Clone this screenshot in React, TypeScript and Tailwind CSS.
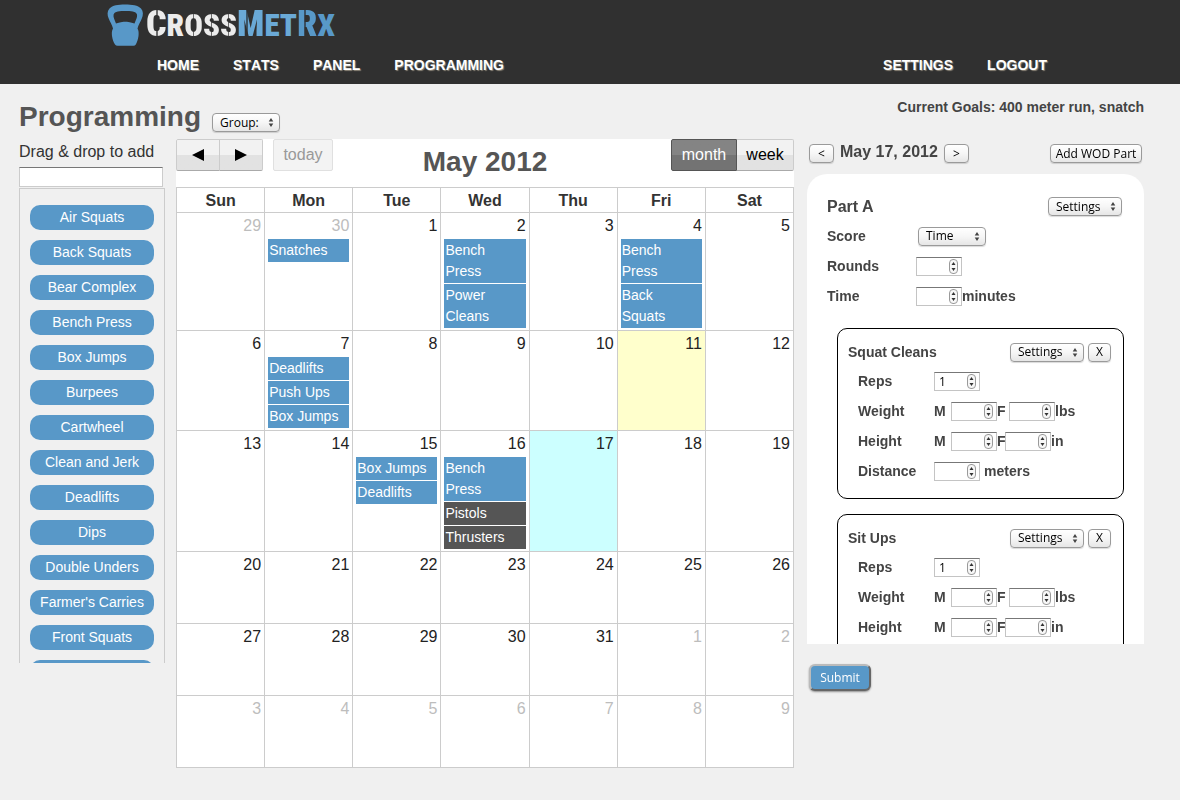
import { useState } from "react";
import type { ReactNode } from "react";

const exercises = [
  "Air Squats",
  "Back Squats",
  "Bear Complex",
  "Bench Press",
  "Box Jumps",
  "Burpees",
  "Cartwheel",
  "Clean and Jerk",
  "Deadlifts",
  "Dips",
  "Double Unders",
  "Farmer's Carries",
  "Front Squats",
  "Handstands",
];

type CalendarEvent = { title: string; dark?: boolean };
type Day = { n: number; other?: boolean; mark?: "today" | "selected"; events?: CalendarEvent[] };

const weeks: Day[][] = [
  [
    { n: 29, other: true },
    { n: 30, other: true, events: [{ title: "Snatches" }] },
    { n: 1 },
    { n: 2, events: [{ title: "Bench Press" }, { title: "Power Cleans" }] },
    { n: 3 },
    { n: 4, events: [{ title: "Bench Press" }, { title: "Back Squats" }] },
    { n: 5 },
  ],
  [
    { n: 6 },
    { n: 7, events: [{ title: "Deadlifts" }, { title: "Push Ups" }, { title: "Box Jumps" }] },
    { n: 8 },
    { n: 9 },
    { n: 10 },
    { n: 11, mark: "today" },
    { n: 12 },
  ],
  [
    { n: 13 },
    { n: 14 },
    { n: 15, events: [{ title: "Box Jumps" }, { title: "Deadlifts" }] },
    {
      n: 16,
      events: [{ title: "Bench Press" }, { title: "Pistols", dark: true }, { title: "Thrusters", dark: true }],
    },
    { n: 17, mark: "selected" },
    { n: 18 },
    { n: 19 },
  ],
  [20, 21, 22, 23, 24, 25, 26].map((n) => ({ n })),
  [{ n: 27 }, { n: 28 }, { n: 29 }, { n: 30 }, { n: 31 }, { n: 1, other: true }, { n: 2, other: true }],
  [3, 4, 5, 6, 7, 8, 9].map((n) => ({ n, other: true })),
];

const controlFont = "font-['Open_Sans','Noto_Sans',sans-serif] text-[12px] leading-4 font-normal text-black";
const controlFrame =
  "h-[19px] rounded-[4px] border border-[#9a9a9a] bg-linear-to-b from-white via-[#f6f6f6] to-[#e6e6e6] shadow-[0_1px_1px_rgba(0,0,0,0.15)]";

// Stencil cut: a thin vertical gap through the middle of a letter.
const cutWhite =
  "bg-clip-text text-transparent bg-[linear-gradient(90deg,#ebebeb_46%,#6a6a6a_46%,#6a6a6a_55%,#ebebeb_55%)]";
const cutSky =
  "bg-clip-text text-transparent bg-[linear-gradient(90deg,#6aa9d6_34%,#3c5668_34%,#3c5668_41%,#6aa9d6_41%)]";
const cutBlue =
  "bg-clip-text text-transparent bg-[linear-gradient(90deg,#5898c8_36%,#3a5063_36%,#3a5063_44%,#5898c8_44%)]";

function Logo() {
  return (
    <a href="#home" aria-label="CrossMetRx" className="flex h-[42px] items-center gap-0.5">
      <svg width="37" height="42" viewBox="0 0 37 42" aria-hidden="true">
        <path
          fillRule="evenodd"
          fill="#5898c8"
          d="M18 0.500C25 0.500 31 1.200 34 4.500C36.500 7.500 36.300 11 34.800 14.500C33.500 18 31.500 20.500 30.500 24.500C31.800 26.500 31.800 29.500 31.500 32C31 35.500 30 38.500 28.800 40.500Q28 41.700 26.500 41.700H10.500Q9 41.700 8 40.500C6.500 38.500 5.500 35.500 5 32C4.700 29.500 4.700 26.500 6 24.500C5 20.500 3 18 1.700 14.500C0.200 11 0 7.500 2.500 4.500C5.500 1.200 11 0.500 18 0.500ZM18.300 7C13 7 7.500 7.200 6.600 10.500C6 13.200 7.500 15.500 9 19.500C11.500 19 13.500 17.700 18.300 17.700C23 17.700 25 19 27.500 19.500C29 15.500 30.600 13.200 30 10.500C29.200 7.200 23.500 7 18.300 7Z"
        />
      </svg>
      <span className="font-['Roboto_Condensed','Roboto',sans-serif] text-[31px] leading-[42px] font-black text-[#ebebeb] uppercase">
        <span className={"text-[36px] " + cutWhite}>C</span>r<span className={cutWhite}>o</span>
        <span className={cutWhite}>s</span>
        <span className={cutWhite}>s</span>
        <span className="text-[#6aa9d6]">
          <span className={"text-[36px] " + cutSky}>M</span>et
        </span>
        <span className="text-[#5898c8]">
          <span className={"text-[36px] " + cutBlue}>R</span>x
        </span>
      </span>
    </a>
  );
}

function NavLink({ children }: { children: string }) {
  return (
    <a
      href={"#" + children.toLowerCase()}
      className="text-[14px] leading-5 font-bold text-white uppercase [font-kerning:none] [text-shadow:1px_1px_1px_#8c8578]"
    >
      {children}
    </a>
  );
}

function PushButton({ children, className, label }: { children: ReactNode; className: string; label?: string }) {
  return (
    <button
      type="button"
      aria-label={label}
      className={"flex shrink-0 items-center justify-center whitespace-nowrap " + controlFont + " " + controlFrame + " " + className}
    >
      {children}
    </button>
  );
}

function Select({ options, label, className }: { options: string[]; label: string; className: string }) {
  return (
    <span className={"relative block shrink-0 " + className}>
      <select
        aria-label={label}
        className={"block w-full appearance-none pl-[7px] " + controlFont + " " + controlFrame}
      >
        {options.map((o) => (
          <option key={o}>{o}</option>
        ))}
      </select>
      <svg className="pointer-events-none absolute top-[5px] right-1.5" width="6" height="9" viewBox="0 0 6 9" aria-hidden="true">
        <path d="M3 0L5.300 3.500H0.700ZM3 9L5.300 5.500H0.700Z" fill="#444" />
      </svg>
    </span>
  );
}

function NumberBox({ label, initial = "" }: { label: string; initial?: string }) {
  const [value, setValue] = useState(initial);
  return (
    <span className="relative block w-[46px] shrink-0">
      <input
        type="number"
        aria-label={label}
        value={value}
        onChange={(e) => setValue(e.target.value)}
        className={
          "block h-[19px] w-full appearance-none border border-[#c4c4c4] border-t-[#777] bg-white pr-4 pl-1 [appearance:textfield] " +
          controlFont
        }
      />
      <svg className="pointer-events-none absolute top-0.5 right-1" width="9" height="15" viewBox="0 0 9 15" aria-hidden="true">
        <rect x="0.500" y="0.500" width="8" height="14" rx="3.500" fill="#f7f7f7" stroke="#9a9a9a" />
        <path d="M4.500 3L6.500 6H2.500ZM4.500 12L6.500 9H2.500Z" fill="#333" />
      </svg>
    </span>
  );
}

function Movement({ name }: { name: string }) {
  const row = "flex h-[30px] items-center pl-2.5";
  const label = "w-[76px] shrink-0";
  return (
    <section className="mb-[15px] h-[171px] rounded-[10px] border border-black pt-[9px] pl-2.5">
      <div className="flex h-7 items-center pr-3">
        <h4 className="flex-1">{name}</h4>
        <Select label={name + " settings"} options={["Settings", "Remove"]} className="w-[74px]" />
        <PushButton label={"Remove " + name} className="ml-1 w-[23px]">
          X
        </PushButton>
      </div>
      <div className={row}>
        <span className={label}>Reps</span>
        <NumberBox label={name + " reps"} initial="1" />
      </div>
      <div className={row}>
        <span className={label}>Weight</span>
        <span className="w-[17px]">M</span>
        <NumberBox label={name + " weight, men"} />
        <span className="w-3">F</span>
        <NumberBox label={name + " weight, women"} />
        <span>lbs</span>
      </div>
      <div className={row}>
        <span className={label}>Height</span>
        <span className="w-[17px]">M</span>
        <NumberBox label={name + " height, men"} />
        <span className="w-2">F</span>
        <NumberBox label={name + " height, women"} />
        <span>in</span>
      </div>
      <div className={row}>
        <span className={label}>Distance</span>
        <NumberBox label={name + " distance"} />
        <span className="ml-1">meters</span>
      </div>
    </section>
  );
}

const barButton =
  "flex h-8 items-center justify-center border border-[#ccc] border-b-[#aaa] bg-linear-to-b from-[#f2f2f2] from-50% to-[#e2e2e2] to-50% text-[16px] text-black";

function Calendar() {
  return (
    <section className="min-w-0 flex-1 bg-white">
      <div className="flex h-12 items-start justify-between">
        <div className="flex flex-1">
          <button type="button" aria-label="Previous month" className={barButton + " w-11 rounded-l-[2px]"}>
            <svg width="12" height="12" viewBox="0 0 12 12" aria-hidden="true">
              <path d="M0 6L12 0V12Z" />
            </svg>
          </button>
          <button type="button" aria-label="Next month" className={barButton + " -ml-px w-11 rounded-r-[2px]"}>
            <svg width="12" height="12" viewBox="0 0 12 12" aria-hidden="true">
              <path d="M12 6L0 0V12Z" />
            </svg>
          </button>
          <button
            type="button"
            disabled
            className="ml-2.5 h-8 w-[60px] rounded-[2px] border border-[#e0e0e0] bg-[#f3f3f3] text-[16px] text-[#999]"
          >
            today
          </button>
        </div>
        <h2 className="pt-[5px] text-[28px] leading-9 font-bold text-[#555] [font-kerning:none]">May 2012</h2>
        <div className="flex flex-1 justify-end">
          <button
            type="button"
            aria-pressed="true"
            className="h-8 w-[66px] rounded-l-[2px] border border-[#555] bg-linear-to-b from-[#848484] from-50% to-[#737373] to-50% text-[16px] text-white"
          >
            month
          </button>
          <button type="button" className={barButton + " w-[57px] rounded-r-[2px] border-l-0"}>
            week
          </button>
        </div>
      </div>
      <table className="w-full table-fixed border-separate border-spacing-0 border-r border-b border-[#ccc] text-[16px] text-[#222]">
        <thead>
          <tr>
            {["Sun", "Mon", "Tue", "Wed", "Thu", "Fri", "Sat"].map((d) => (
              <th key={d} scope="col" className="h-[25px] border-t border-l border-[#ccc] p-0 pt-0.5 leading-[22px] font-bold text-[#333]">
                {d}
              </th>
            ))}
          </tr>
        </thead>
        <tbody>
          {weeks.map((week, i) => (
            <tr key={i}>
              {week.map((day) => (
                <td
                  key={day.n}
                  className={
                    "h-[72px] border-t border-l border-[#ccc] p-0 pb-px align-top " +
                    (day.mark === "today" ? "bg-[#ffffcc]" : day.mark === "selected" ? "bg-[#ccffff]" : "bg-white")
                  }
                >
                  <div className={"h-[26px] pr-[3px] text-right leading-[26px] " + (day.other ? "text-[#bdbdbd]" : "")}>{day.n}</div>
                  {day.events?.map((e) => (
                    <a
                      key={e.title}
                      href="#event"
                      className={
                        "mr-[3px] mb-px ml-[3px] block py-px pr-1 pl-px text-[14px] leading-[21px] text-white " +
                        (e.dark ? "bg-[#555]" : "bg-[#5898c8]")
                      }
                    >
                      {e.title}
                    </a>
                  ))}
                </td>
              ))}
            </tr>
          ))}
        </tbody>
      </table>
    </section>
  );
}

export default function App() {
  return (
    <div className="min-h-screen bg-[#f0f0f0] font-['Liberation_Sans',Arial,sans-serif] text-[#444]">
      <header className="h-[84px] bg-[#303030] pt-1">
        <div className="pl-[107px]">
          <Logo />
        </div>
        <nav className="mt-[9px] flex gap-[34px] pr-[133px] pl-[157px]">
          <NavLink>Home</NavLink>
          <NavLink>Stats</NavLink>
          <NavLink>Panel</NavLink>
          <NavLink>Programming</NavLink>
          <span className="flex-1" />
          <NavLink>Settings</NavLink>
          <NavLink>Logout</NavLink>
        </nav>
      </header>

      <main className="pr-9 pl-[19px]">
        <div className="flex h-[55px] items-start">
          <h1 className="pt-[17px] text-[28px] leading-8 font-bold text-[#555]">Programming</h1>
          <div className="pt-[29px] pl-[11px]">
            <Select label="Group" options={["Group:", "All"]} className="w-[68px]" />
          </div>
          <p className="ml-auto pt-[13px] text-[14px] leading-5 font-bold">Current Goals: 400 meter run, snatch</p>
        </div>

        <div className="flex items-start">
          <aside className="mr-[11px] w-[146px] shrink-0">
            <label htmlFor="exercise-filter" className="block h-7 pt-px text-[16px] leading-6 whitespace-nowrap text-[#333]">
              Drag &amp; drop to add
            </label>
            <input
              id="exercise-filter"
              type="text"
              className="block h-5 w-[144px] border border-[#ccc] border-t-[#777] bg-white px-1 text-[12px]"
            />
            <ul className="mt-px flex h-[475px] flex-col gap-2.5 overflow-y-auto border border-b-0 border-[#ccc] px-2.5 pt-4 [scrollbar-width:none]">
              {exercises.map((name) => (
                <li
                  key={name}
                  className="h-[25px] shrink-0 cursor-move rounded-[10px] bg-[#5898c8] text-center text-[14px] leading-6 whitespace-nowrap text-white"
                >
                  {name}
                </li>
              ))}
            </ul>
          </aside>

          <Calendar />

          <form className="ml-[13px] w-[337px] shrink-0 text-[14px] leading-5 font-bold" onSubmit={(e) => e.preventDefault()}>
            <div className="flex h-[35px] items-start pt-1 pr-0.5 pl-0.5">
              <PushButton label="Previous day" className="mt-px w-[25px]">
                &lt;
              </PushButton>
              <h3 className="mx-1.5 text-[16px] leading-[18px]">May 17, 2012</h3>
              <PushButton label="Next day" className="mt-px w-[25px]">
                &gt;
              </PushButton>
              <PushButton className="mt-px ml-auto w-[92px]">Add WOD Part</PushButton>
            </div>

            <div className="h-[470px] overflow-y-auto rounded-t-[20px] bg-white pt-[18px] pr-5 pl-5 [scrollbar-width:none]">
              <div className="flex h-[29px] items-center justify-between pr-0.5">
                <h3 className="text-[16px]">Part A</h3>
                <Select label="Part A settings" options={["Settings", "Remove"]} className="w-[74px]" />
              </div>
              <div className="flex h-[30px] items-center">
                <span className="w-[91px]">Score</span>
                <Select label="Score" options={["Time", "Rounds", "Weight"]} className="w-[68px]" />
              </div>
              <div className="flex h-[30px] items-center">
                <span className="w-[89px]">Rounds</span>
                <NumberBox label="Rounds" />
              </div>
              <div className="flex h-[30px] items-center">
                <span className="w-[89px]">Time</span>
                <NumberBox label="Time in minutes" />
                <span>minutes</span>
              </div>
              <div className="mt-[17px] ml-2.5">
                <Movement name="Squat Cleans" />
                <Movement name="Sit Ups" />
              </div>
            </div>

            <button
              type="submit"
              className="mt-5 ml-0.5 block h-[27px] w-[62px] rounded-[6px] border-2 border-t-[#bbb] border-r-[#666] border-b-[#666] border-l-[#bbb] bg-[#5898c8] font-['Open_Sans','Noto_Sans',sans-serif] text-[12px] leading-4 font-medium text-white shadow-[0_1px_2px_rgba(0,0,0,0.4)]"
            >
              Submit
            </button>
          </form>
        </div>
      </main>
    </div>
  );
}
